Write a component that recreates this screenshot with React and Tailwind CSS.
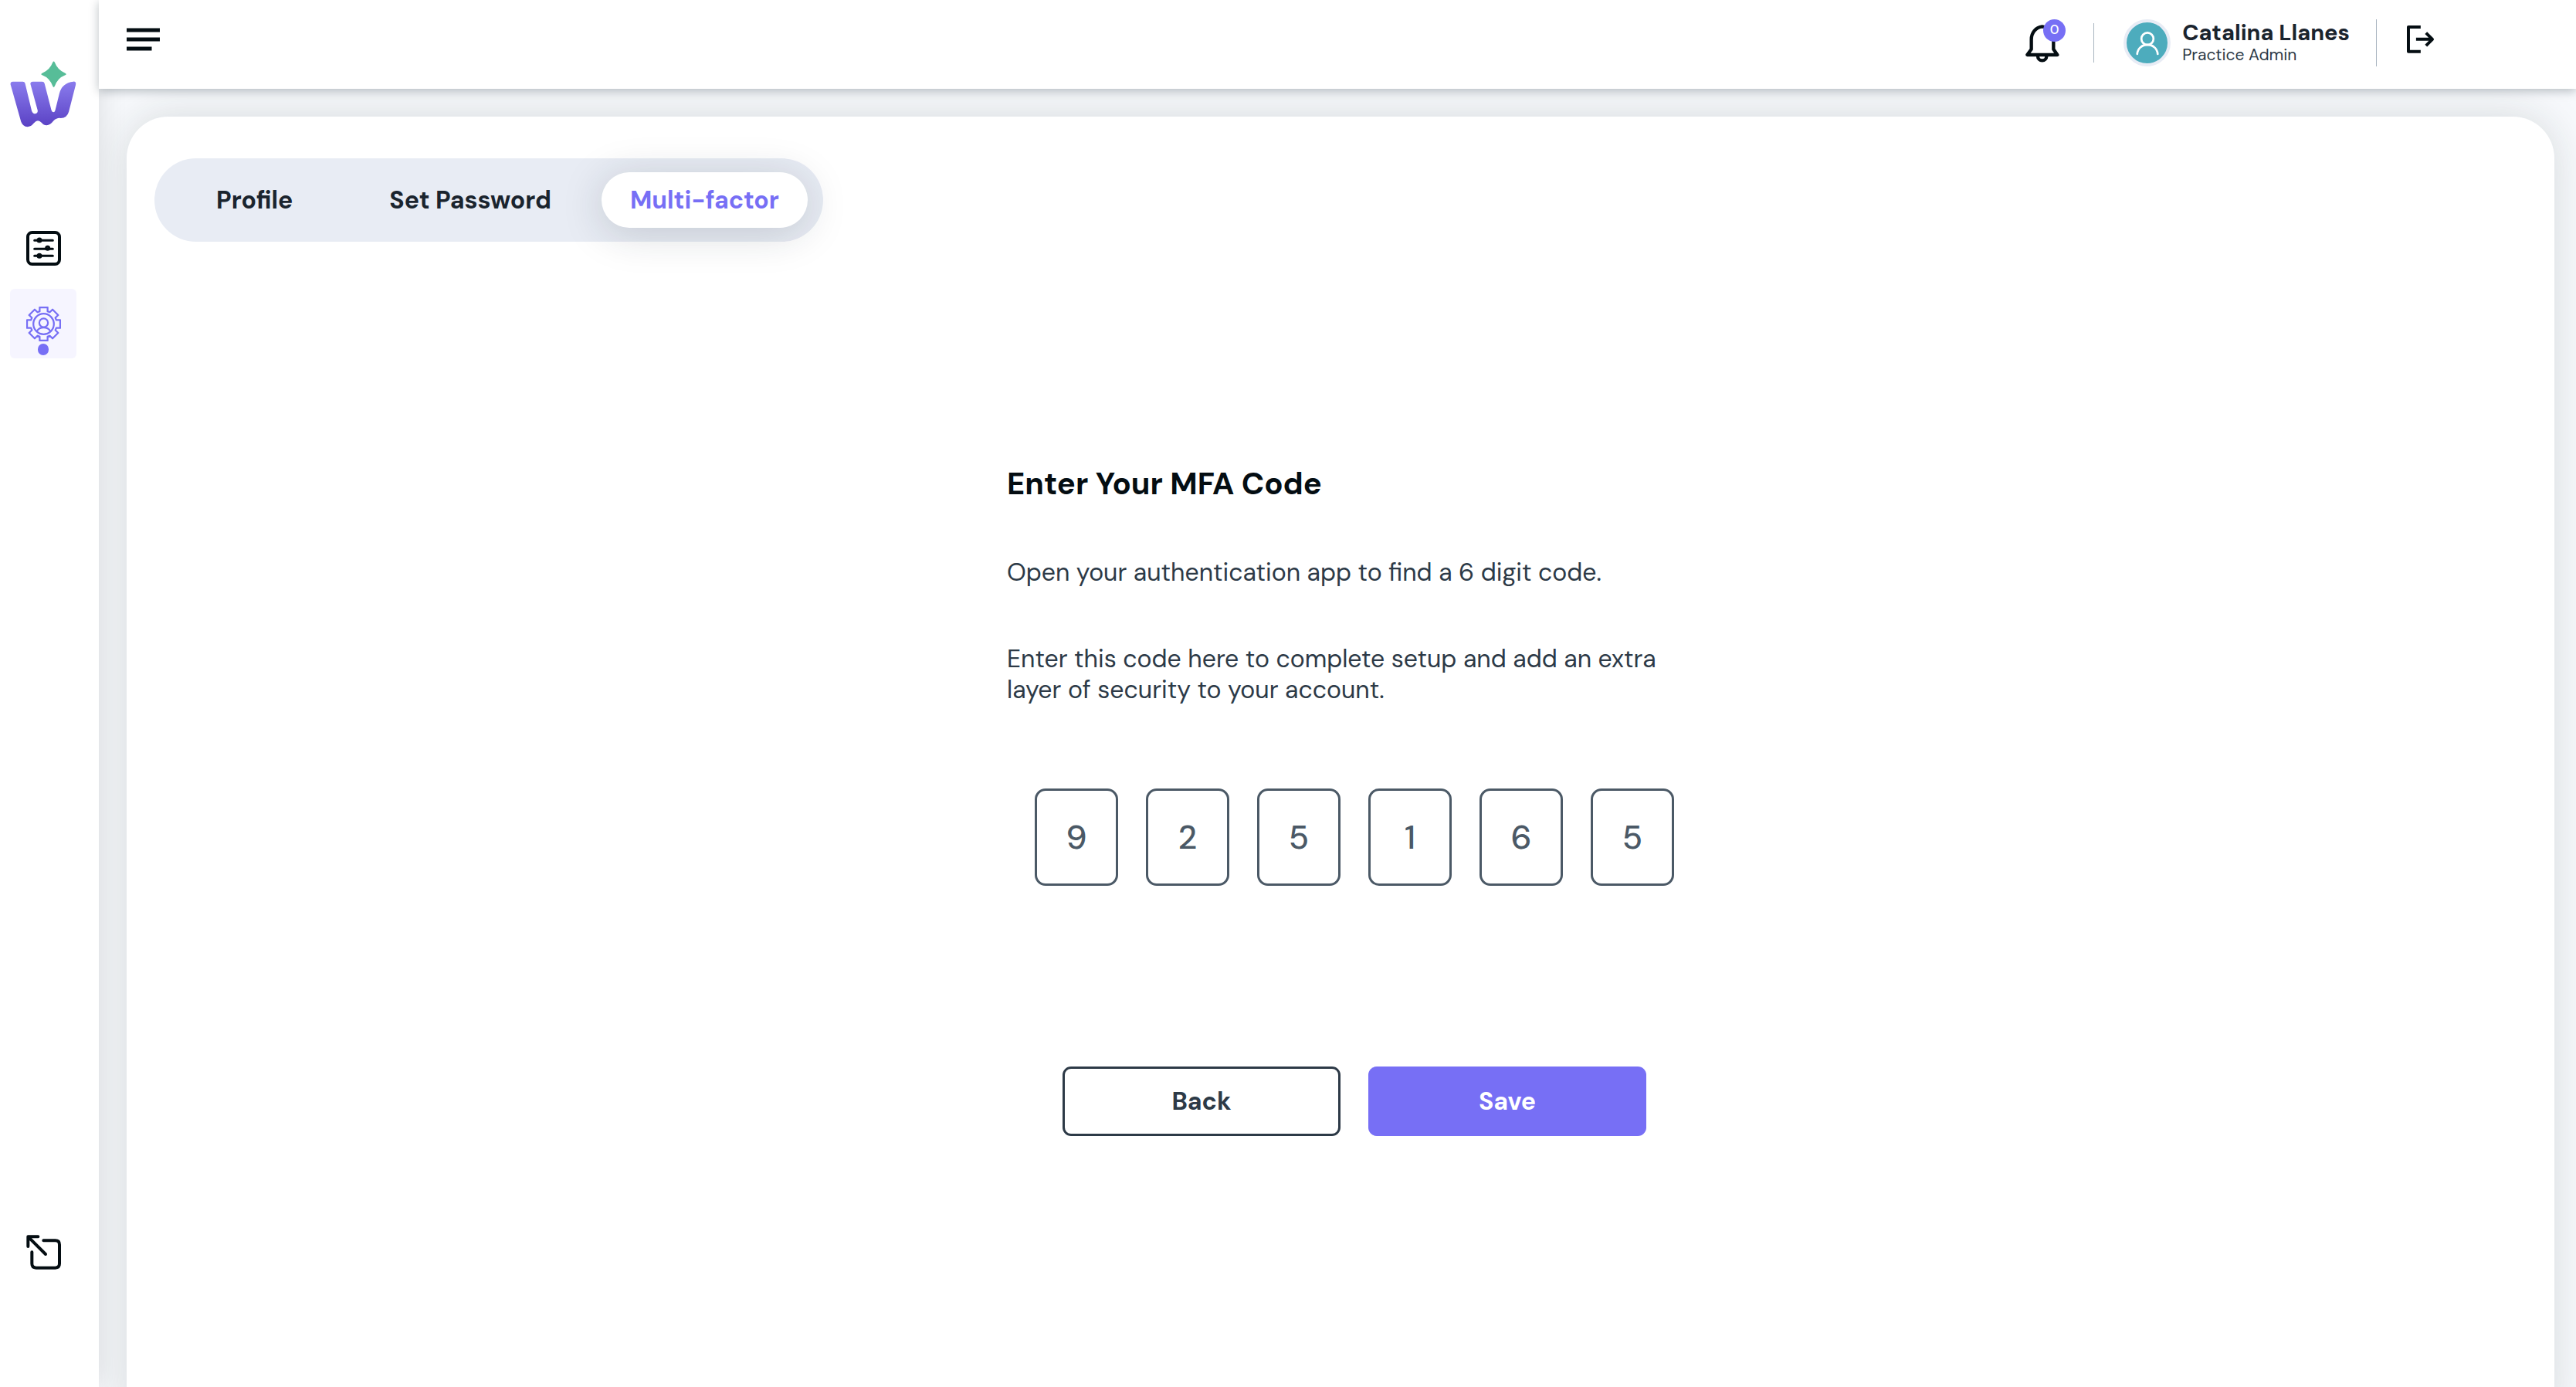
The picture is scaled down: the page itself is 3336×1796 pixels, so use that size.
import { useState } from "react";

const TABS = ["Profile", "Set Password", "Multi-factor"];

function Logo() {
  return (
    <svg viewBox="38 56 260 259" className="h-[86px] w-[86px]" aria-hidden="true">
      <defs>
        <linearGradient id="logo-fill" x1="0" y1="0" x2="0" y2="1">
          <stop offset="0" stopColor="#8a7ced" />
          <stop offset="1" stopColor="#5a41c4" />
        </linearGradient>
      </defs>
      <path
        fill="url(#logo-fill)"
        d="M49 136H88Q95 136 97 143L123 251Q127 262 137 262Q148 260 146 248L118 146Q116 137 126 136H164Q171 136 173 143L200 248Q203 256 208 256Q213 256 215 248L231 183Q241 141 286 136Q298 135 295 149L268 254Q261 279 236 279Q221 277 208 290Q195 307 181 307Q170 307 162 297Q154 289 147 289Q140 289 131 299Q120 313 106 313Q88 313 81 293L40 148Q38 137 49 136Z"
      />
      <path
        fill="#57bd98"
        d="M205 61Q209 53 213 61Q224 91 254 103Q262 107 254 111Q225 122 213 154Q209 162 205 154Q193 122 164 111Q156 107 164 103Q194 91 205 61Z"
      />
    </svg>
  );
}

function SlidersIcon() {
  return (
    <svg viewBox="102 714 135 135" className="h-[45px] w-[45px]" fill="none" stroke="#040d12" strokeLinecap="round" aria-hidden="true">
      <rect x="108" y="720" width="123" height="123" rx="17" strokeWidth="12" />
      <g strokeWidth="9">
        <path d="M134 751H205M134 784H205M134 811H205" />
        <circle cx="153" cy="750" r="6" />
        <circle cx="185" cy="781" r="6" />
        <circle cx="153" cy="811" r="6" />
      </g>
    </svg>
  );
}

function gearOutline() {
  const tooth = [[-5, -16], [-5, -21], [5, -21], [5, -16]];
  const points = [];
  for (let i = 0; i < 8; i += 1) {
    const a = (i * Math.PI) / 4;
    tooth.forEach(([x, y]) => {
      points.push(`${(x * Math.cos(a) - y * Math.sin(a)).toFixed(2)} ${(x * Math.sin(a) + y * Math.cos(a)).toFixed(2)}`);
    });
  }
  return `M${points.join("L")}Z`;
}

function UserGearIcon() {
  return (
    <svg viewBox="-22 -22 44 44" className="h-[45px] w-[45px]" fill="none" stroke="#776ff5" strokeWidth="2.2" strokeLinejoin="round" aria-hidden="true">
      <path d={gearOutline()} />
      <circle r="13" />
      <circle cy="-1.5" r="5.5" />
      <path d="M-8.500 9C-5 3 5 3 8.500 9" />
    </svg>
  );
}

function ExpandIcon() {
  return (
    <svg viewBox="102 117 135 135" className="h-[45px] w-[45px]" fill="none" stroke="#040d12" strokeWidth="12" strokeLinecap="round" strokeLinejoin="round" aria-hidden="true">
      <path d="M169 139H215Q231 139 231 155V229Q231 245 215 245H140Q124 245 124 229V184" />
      <path d="M109 162V124H148M112 127L177 192" />
    </svg>
  );
}

function BellIcon() {
  return (
    <svg viewBox="68 60 132 150" className="h-[50px] w-11" fill="none" stroke="#040d12" strokeWidth="13" strokeLinejoin="round" aria-hidden="true">
      <path d="M75 180L91 158V120C91 94 108 73 133 70C159 73 177 94 177 120V158L192 180Z" />
      <path d="M116 185A17 17 0 0 0 150 185" />
    </svg>
  );
}

function UserIcon() {
  return (
    <svg viewBox="498 88 90 94" className="h-8 w-8" fill="none" stroke="#ffffff" strokeWidth="8" strokeLinecap="round" aria-hidden="true">
      <circle cx="543" cy="118" r="23" />
      <path d="M504 176C508 129 578 129 582 176" />
    </svg>
  );
}

function LogoutIcon() {
  return (
    <svg viewBox="168 66 112 112" className="h-[37px] w-[37px]" fill="none" stroke="#040d12" strokeWidth="12" strokeLinejoin="round" aria-hidden="true">
      <path d="M225 75H177V171H225" />
      <path d="M207 123H270M246 98L271 123L246 148" />
    </svg>
  );
}

function MenuIcon() {
  return (
    <svg viewBox="0 0 43 30" className="h-[30px] w-[43px]" fill="#040d12" aria-hidden="true">
      <path d="M0 .5H43V5.500H0ZM0 12.500H43V17.500H0ZM0 24.500H32.500V29.500H0Z" />
    </svg>
  );
}

function Sidebar() {
  return (
    <aside className="z-10 flex w-32 shrink-0 flex-col bg-white pt-[79px] pb-[130px] pl-[13px] shadow-[0_0_36px_rgba(20,20,10,0.12)]">
      <a href="#home" aria-label="Home" className="w-[86px]">
        <Logo />
      </a>
      <nav aria-label="Main" className="mt-[111px] flex grow flex-col gap-2">
        <a href="#preferences" aria-label="Preferences" className="flex h-[90px] w-[86px] items-center justify-center">
          <SlidersIcon />
        </a>
        <a
          href="#account"
          aria-label="Account settings"
          aria-current="page"
          className="flex h-[90px] w-[86px] flex-col items-center gap-[3px] rounded-md bg-[#f6f5ff] pt-[23px]"
        >
          <UserGearIcon />
          <span className="h-[15px] w-3.5 rounded-full bg-[#776ff5]" />
        </a>
        <a href="#expand" aria-label="Expand" className="mt-auto flex h-[90px] w-[86px] items-center justify-center">
          <ExpandIcon />
        </a>
      </nav>
    </aside>
  );
}

function Header() {
  return (
    <header className="relative z-20 flex h-[115px] shrink-0 items-start justify-between bg-white pt-[25px] pr-[183px] pl-9 shadow-[0_3px_12px_rgba(10,30,40,0.28)]">
      <button type="button" aria-label="Toggle menu" className="flex h-[52px] items-center">
        <MenuIcon />
      </button>
      <div className="flex h-[61px] items-center">
        <button type="button" aria-label="Notifications" className="relative">
          <BellIcon />
          <span className="absolute -top-1.5 left-[23px] flex h-[29px] w-[29px] items-center justify-center rounded-full bg-[#776ff5] text-[17px] font-medium text-white">
            0
          </span>
        </button>
        <span className="ml-11 h-[51px] w-px bg-[#a9b5c0]" />
        <div className="ml-[38px] flex items-center gap-[15px]">
          <span className="flex h-[61px] w-[61px] items-center justify-center rounded-full border-4 border-[#e8ecf5] bg-[#4dacbd]">
            <UserIcon />
          </span>
          <div className="pb-1">
            <p className="text-[29px] leading-[34px] font-bold text-[#1a242e]">Catalina Llanes</p>
            <p className="text-[21px] leading-6 text-[#2d3a47]">Practice Admin</p>
          </div>
        </div>
        <span className="ml-[34px] h-[61px] w-px bg-[#a9b5c0]" />
        <button type="button" aria-label="Log out" className="mb-2.5 ml-[38px]">
          <LogoutIcon />
        </button>
      </div>
    </header>
  );
}

function Tabs({ active, onSelect }) {
  return (
    <div role="tablist" className="flex h-[108px] items-center gap-[5px] self-start rounded-full bg-[#e8ecf4] px-5">
      {TABS.map((tab) => (
        <button
          key={tab}
          type="button"
          role="tab"
          aria-selected={tab === active}
          onClick={() => onSelect(tab)}
          className={
            tab === active
              ? "h-[72px] rounded-full bg-white px-[37px] text-[32px] font-bold text-[#776ff5] shadow-[0_7px_54px_rgba(30,40,50,0.18)]"
              : "h-[72px] rounded-full px-[60px] text-[32px] font-bold text-[#1a242e]"
          }
        >
          {tab}
        </button>
      ))}
    </div>
  );
}

function MfaForm() {
  const [code, setCode] = useState(["9", "2", "5", "1", "6", "5"]);
  const update = (index, value) => setCode(code.map((d, i) => (i === index ? value.slice(-1) : d)));

  return (
    <form className="mt-[289px] flex w-[864px] flex-col self-center" onSubmit={(e) => e.preventDefault()}>
      <h1 className="text-[40px] leading-[48px] font-bold text-[#040d12]">Enter Your MFA Code</h1>
      <p className="mt-[71px] text-[32px] leading-10 text-[#2d3a47]">Open your authentication app to find a 6 digit code.</p>
      <p className="mt-[72px] text-[32px] leading-10 text-[#2d3a47]">
        Enter this code here to complete setup and add an extra layer of security to your account.
      </p>
      <div className="mt-[108px] flex gap-9 pl-9">
        {code.map((digit, i) => (
          <input
            key={i}
            type="text"
            inputMode="numeric"
            aria-label={`Digit ${i + 1}`}
            value={digit}
            onChange={(e) => update(i, e.target.value)}
            className="h-[126px] w-[108px] rounded-[14px] border-3 border-[#4b5966] bg-white text-center text-[43px] font-medium text-[#4b5966] outline-none"
          />
        ))}
      </div>
      <div className="mt-[234px] grid grid-cols-2 gap-9 pr-9 pl-[72px]">
        <button type="button" className="h-[90px] rounded-[11px] border-3 border-[#2d3a47] bg-white text-[32px] font-bold text-[#2d3a47]">
          Back
        </button>
        <button type="submit" className="h-[90px] rounded-[11px] bg-[#776ff5] text-[32px] font-bold text-white">
          Save
        </button>
      </div>
    </form>
  );
}

export default function App() {
  const [tab, setTab] = useState("Multi-factor");
  return (
    <div className="flex h-screen min-h-[1600px] overflow-hidden bg-[#f7f9fc] font-['DM_Sans',Inter,sans-serif]">
      <Sidebar />
      <div className="flex min-w-0 grow flex-col">
        <Header />
        <main className="flex grow flex-col px-9 pt-9 pr-7">
          <section className="-mb-9 flex grow flex-col rounded-t-[54px] bg-white px-9 pt-[54px] shadow-[0_0_54px_rgba(30,38,35,0.15)]">
            <Tabs active={tab} onSelect={setTab} />
            <MfaForm />
          </section>
        </main>
      </div>
    </div>
  );
}
